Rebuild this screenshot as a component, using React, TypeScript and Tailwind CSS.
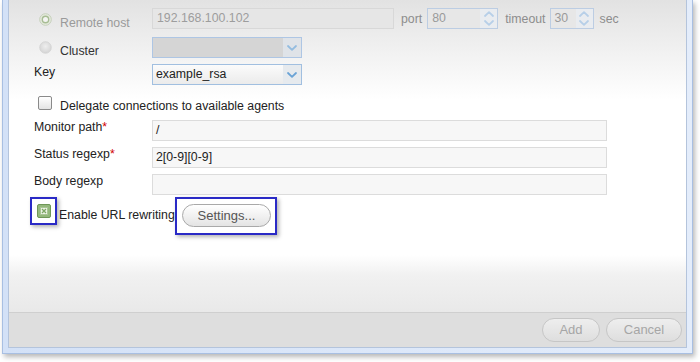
import React from "react";

function Chevron({ up = false, color }: { up?: boolean; color: string }) {
  return (
    <svg width="10" height="6" viewBox="0 0 10 6" fill="none">
      <path
        d={up ? "M1 5 L5 1.2 L9 5" : "M1 1 L5 4.8 L9 1"}
        stroke={color}
        strokeWidth="1.8"
        strokeLinecap="round"
        strokeLinejoin="round"
      />
    </svg>
  );
}

function Radio({ checked }: { checked?: boolean }) {
  return (
    <svg width="13" height="13" viewBox="0 0 13 13">
      <defs>
        <radialGradient id="rg" cx="50%" cy="40%" r="60%">
          <stop offset="0%" stopColor="#eeeeee" />
          <stop offset="100%" stopColor="#d4d4d4" />
        </radialGradient>
      </defs>
      {checked ? (
        <>
          <circle cx="6.5" cy="6.5" r="5.8" fill="#e6eade" stroke="#c5d0bb" strokeWidth="1" />
          <circle cx="6.5" cy="6.5" r="3.2" fill="#f4f4f2" stroke="#a7bd94" strokeWidth="1.4" />
        </>
      ) : (
        <circle cx="6.5" cy="6.5" r="5.8" fill="url(#rg)" stroke="#d2d2d2" strokeWidth="0.8" />
      )}
    </svg>
  );
}

function Spinner({ value, width }: { value: string; width: string }) {
  return (
    <div className={`${width} h-[21px] flex border border-[#bccde3] bg-[#e7e7e7]`}>
      <span className="flex-1 pl-[4px] leading-[19px] text-[#9a9a9a]">{value}</span>
      <div className="w-[17px] flex flex-col items-center justify-center gap-[3px] bg-[#e9ecf0]">
        <Chevron up color="#b7cfe8" />
        <Chevron color="#b7cfe8" />
      </div>
    </div>
  );
}

function Select({ value, disabled }: { value?: string; disabled?: boolean }) {
  return (
    <div
      className={`w-[150px] h-[21px] flex border ${
        disabled
          ? "border-[#aec6e4] bg-[#d5d5d5]"
          : "border-[#a1bfe0] bg-[linear-gradient(to_bottom,#fbfbfb,#ebebeb)]"
      }`}
    >
      <span className="flex-1 pl-[3px] leading-[19px] text-[#222]">{value}</span>
      <div
        className={`w-[18px] flex items-center justify-center ${
          disabled ? "bg-[#dfe3e8]" : "bg-[#e6eaee]"
        }`}
      >
        <Chevron color={disabled ? "#93bce0" : "#6aa3d6"} />
      </div>
    </div>
  );
}

function TextRow({ label, value, required }: { label: string; value?: string; required?: boolean }) {
  return (
    <div className="flex items-start h-[21px] pl-[25px] mt-[6px] first:mt-0">
      <span className="w-[118px] leading-4 mt-[-1px] text-[#222]">
        {label}
        {required && <span className="text-[#d00000]">*</span>}
      </span>
      <div className="w-[455px] h-[21px] border border-[#dcdcdc] bg-[#f7f7f7] pl-[3px] leading-[19px] text-[#222]">
        {value}
      </div>
    </div>
  );
}

function Button({ label, className }: { label: string; className: string }) {
  return (
    <div
      className={`h-[24px] rounded-full border border-[#c6c6c6] bg-[linear-gradient(to_bottom,#eeeeee,#dedede)] flex items-center justify-center text-[#a6a6a6] text-[13px] ${className}`}
    >
      {label}
    </div>
  );
}

export default function App() {
  return (
    <div className="w-[700px] h-[362px] bg-white overflow-hidden font-['Liberation_Sans',Arial,sans-serif] text-[12.3px] leading-4">
      <div className="ml-[2px] w-[691px] h-[354px] flex px-[5px] pb-[5px] bg-[linear-gradient(to_right,#d3e1f7,#e4edfb)] border-x border-b border-[#a8bfe2] shadow-[2px_3px_5px_rgba(0,0,0,0.28)]">
        <div className="flex-1 flex flex-col border-x border-b border-[#b4c4dc]">
          <div className="flex-1 pt-[8px] bg-[linear-gradient(to_bottom,#e2e2e2_0px,#f2f2f2_55px,#ffffff_100px,#ffffff_255px,#f1f1f1_275px,#e9e9e9_311px)]">
            {/* remote host */}
            <div className="flex items-start h-[21px]">
              <div className="w-[143px] pl-[30px] flex items-start">
                <div className="mt-[5px] h-[13px]">
                  <Radio checked />
                </div>
                <span className="ml-[8px] mt-[7px] leading-4 text-[#9a9a9a]">Remote host</span>
              </div>
              <div className="w-[242px] h-[21px] border border-[#d8d8d8] bg-[#e6e6e6] pl-[4px] leading-[19px] text-[#9d9d9d]">
                192.168.100.102
              </div>
              <div className="h-[21px] flex items-center text-[#8d8d8d]">
                <span className="ml-[7px] mr-[5px]">port</span>
                <Spinner value="80" width="w-[71px]" />
                <span className="ml-[7px] mr-[4px]">timeout</span>
                <Spinner value="30" width="w-[44px]" />
                <span className="ml-[6px]">sec</span>
              </div>
            </div>

            {/* cluster */}
            <div className="flex items-start h-[21px] mt-[8px]">
              <div className="w-[143px] pl-[30px] flex items-start">
                <div className="mt-[4px] h-[13px]">
                  <Radio />
                </div>
                <span className="ml-[8px] mt-[6px] leading-4 text-[#333]">Cluster</span>
              </div>
              <Select disabled />
            </div>

            {/* key */}
            <div className="flex items-start h-[21px] mt-[6px] pl-[25px]">
              <span className="w-[118px] leading-4 text-[#222]">Key</span>
              <Select value="example_rsa" />
            </div>

            {/* delegate */}
            <div className="flex items-start h-[14px] mt-[11px] pl-[29px]">
              <div className="w-[14px] h-[14px] rounded-[2px] border border-[#8a8a8a] bg-[linear-gradient(to_bottom,#ffffff,#e4e4e4)]" />
              <span className="ml-[8px] mt-[2px] leading-4 text-[#222]">
                Delegate connections to available agents
              </span>
            </div>

            <div className="mt-[10px]">
              <TextRow label="Monitor path" value="/" required />
              <TextRow label="Status regexp" value="2[0-9][0-9]" required />
              <TextRow label="Body regexp" />
            </div>

            {/* url rewriting */}
            <div className="flex items-start mt-[2px] pl-[21px]">
              <div className="w-[27px] h-[28px] border-2 border-[#2a2ac6] shadow-[2px_2px_4px_rgba(0,0,0,0.3)] flex items-center justify-center">
                <svg width="14" height="14" viewBox="0 0 14 14">
                  <rect x="0.5" y="0.5" width="13" height="13" rx="1.5" fill="#94b87c" stroke="#6f9757" />
                  <rect x="3.5" y="3.5" width="7" height="7" fill="#eef4e8" stroke="#a9c595" />
                  <path d="M5 5 L9 9 M9 5 L5 9" stroke="#7da664" strokeWidth="1.3" />
                </svg>
              </div>
              <span className="ml-[2px] mt-[10px] leading-4 text-[#222] w-[116px] whitespace-nowrap">
                Enable URL rewriting
              </span>
              <div className="w-[102px] h-[38px] border-2 border-[#2a2ac6] shadow-[2px_2px_4px_rgba(0,0,0,0.3)] pl-[5px] pt-[5px]">
                <div className="w-[89px] h-[23px] rounded-full border border-[#a9a9a9] bg-[linear-gradient(to_bottom,#ffffff,#e4e4e4)] flex items-center justify-center text-[#555] text-[13px]">
                  Settings...
                </div>
              </div>
            </div>
          </div>

          <div className="h-[35px] border-t border-[#cfcfcf] bg-[#dedede] flex items-center justify-end gap-[6px] pr-[4px]">
            <Button label="Add" className="w-[58px]" />
            <Button label="Cancel" className="w-[76px]" />
          </div>
        </div>
      </div>
    </div>
  );
}
